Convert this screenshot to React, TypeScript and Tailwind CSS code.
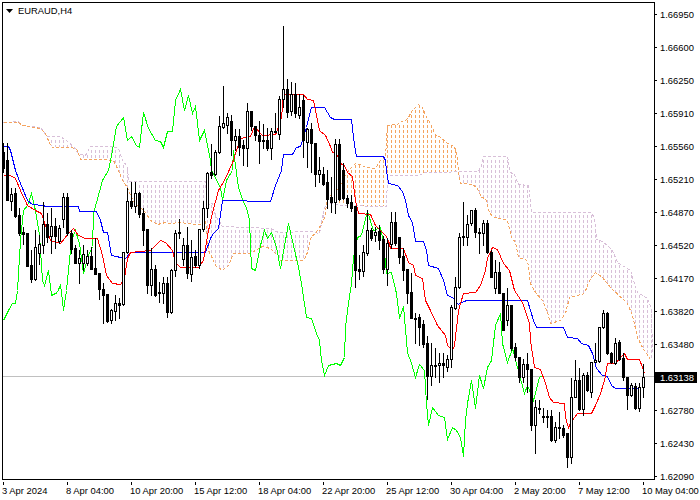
type Pt = [number, number];

// high, low, body top, body bottom, bullish (white) - one candle every 4px from x=3
const candles: number[][] = [
  [143,172,152,168,0],[143,200,160,200,0],[188,210,194,201,1],[188,217,193,216,0],[208,235,215,233,0],[227,244,232,234,0],[233,266,233,266,0],[250,282,265,279,0],
  [230,280,247,279,1],[235,264,244,253,1],[202,253,224,245,1],[213,242,224,237,0],[208,253,226,236,1],[218,248,226,236,0],[225,243,228,241,1],[193,227,197,219,1],
  [193,235,197,233,0],[230,253,233,249,0],[245,263,248,263,0],[250,283,258,263,1],[245,270,254,263,1],[250,265,256,263,1],[247,269,256,269,0],[238,274,268,274,0],
  [273,299,273,289,0],[283,323,289,295,0],[294,322,294,321,0],[309,323,310,320,1],[295,320,303,311,1],[298,318,303,305,0],[252,305,252,304,1],[188,253,201,252,1],
  [182,208,201,206,0],[182,212,193,206,1],[192,217,193,214,0],[208,245,213,230,0],[229,293,229,285,0],[248,295,269,285,1],[265,296,269,295,0],[282,302,292,293,0],
  [277,303,283,293,1],[277,317,283,312,0],[269,313,270,312,1],[230,276,233,270,1],[219,238,232,233,0],[238,265,245,259,1],[227,278,245,273,0],[240,281,257,274,1],
  [250,267,256,265,0],[229,268,229,265,1],[201,231,208,229,1],[172,217,173,208,1],[144,178,172,175,0],[150,175,152,174,1],[116,153,126,152,1],[86,128,123,127,1],
  [113,133,117,125,1],[115,155,121,140,0],[129,150,136,140,1],[129,155,136,147,0],[140,165,145,148,0],[103,166,111,148,1],[111,130,111,126,0],[126,140,126,135,0],
  [121,163,135,141,0],[124,148,140,141,0],[128,150,140,148,0],[128,159,131,148,1],[113,132,131,132,0],[96,139,99,134,1],[26,107,89,99,1],[79,117,89,112,0],
  [82,115,94,111,1],[83,117,94,113,0],[94,118,107,115,1],[95,157,100,140,0],[128,167,129,142,1],[123,172,129,143,0],[143,186,143,174,0],[157,182,170,174,1],
  [167,185,174,184,0],[170,208,182,199,0],[177,212,197,202,0],[139,213,144,202,1],[139,200,144,199,0],[163,199,170,198,0],[195,207,198,203,0],[195,211,202,208,0],
  [206,287,206,270,0],[255,279,269,271,0],[245,276,252,271,1],[210,255,230,253,1],[228,240,230,238,0],[227,241,232,235,1],[225,249,231,240,0],[236,273,239,269,0],
  [238,285,243,269,1],[212,248,222,244,1],[212,245,222,243,0],[237,263,237,257,0],[248,280,256,270,0],[269,303,269,293,0],[273,318,292,318,0],[313,343,318,319,0],
  [314,345,317,327,0],[320,347,324,344,0],[336,399,343,376,0],[343,385,365,376,1],[348,377,365,366,0],[353,382,363,365,1],[353,377,363,365,0],[355,371,359,367,1],
  [305,367,307,359,1],[277,309,287,308,1],[233,288,237,287,1],[202,245,236,237,0],[215,245,224,237,1],[210,225,210,223,1],[208,237,210,232,0],[228,253,232,233,0],
  [220,245,223,233,1],[220,253,223,252,0],[250,277,252,277,0],[260,293,272,288,1],[262,293,272,293,0],[293,330,293,330,0],[288,325,305,320,1],[305,350,305,348,0],
  [343,360,347,357,0],[357,382,357,377,0],[359,382,364,377,1],[353,392,364,369,0],[369,430,369,425,0],[400,453,407,425,1],[400,413,408,409,0],[408,422,416,417,0],
  [410,427,416,417,0],[410,441,416,440,0],[422,442,427,440,1],[412,438,427,428,0],[425,437,428,435,0],[433,467,433,457,0],[378,463,397,457,1],[360,397,380,397,1],
  [368,410,380,409,0],[373,415,375,409,1],[372,391,375,390,0],[362,397,362,392,1],[343,362,360,362,1],[327,362,327,361,1],[310,328,313,327,1],[312,354,313,353,0],
  [352,363,353,362,0],[338,364,343,363,1],[340,360,342,359,0],[353,380,358,377,0],[377,409,377,395,0],[383,396,385,395,1],[383,409,386,408,0],[383,411,387,408,1],
  [364,397,377,387,1],
];

const kijun: Pt[] = [[3,146],[8,146],[10,150],[15,170],[20,183],[27,200],[32,204],[43,205],[45,206],[78,206],[79,211],[96,211],[100,220],[103,232],[107,232],[111,255],[125,258],[130,252],[205,252],[210,238],[213,233],[218,228],[222,200],[270,201],[275,185],[281,170],[283,154],[292,154],[296,147],[300,146],[306,127],[311,107],[324,107],[330,117],[334,119],[351,119],[354,145],[356,156],[383,156],[385,160],[386,170],[388,183],[397,185],[402,191],[405,200],[408,215],[412,222],[415,241],[423,241],[426,250],[428,265],[438,268],[443,280],[447,295],[452,297],[458,304],[463,301],[467,300],[527,300],[533,320],[536,327],[563,327],[567,337],[577,338],[581,343],[588,345],[592,353],[596,368],[602,375],[607,376],[611,385],[615,388],[640,388]];

const tenkan: Pt[] = [[3,175],[10,175],[15,178],[20,190],[27,205],[35,210],[41,213],[45,225],[50,240],[60,243],[68,233],[73,228],[78,235],[85,238],[97,238],[102,255],[106,275],[112,283],[120,284],[124,278],[127,258],[130,252],[150,250],[160,240],[165,242],[172,250],[175,262],[180,267],[198,267],[203,260],[207,235],[212,212],[218,190],[225,178],[233,160],[235,153],[240,138],[250,136],[254,126],[262,135],[275,134],[276,132],[281,117],[283,94],[303,94],[307,99],[313,100],[316,115],[319,130],[325,135],[330,146],[332,152],[336,153],[340,163],[344,165],[347,172],[352,176],[355,200],[358,213],[370,214],[375,225],[385,235],[388,240],[390,248],[403,248],[408,262],[413,265],[415,275],[422,278],[425,300],[430,310],[437,325],[445,335],[447,345],[452,350],[454,345],[458,310],[463,293],[475,292],[480,285],[485,270],[487,258],[492,247],[497,249],[503,263],[509,270],[514,290],[522,302],[529,323],[530,340],[534,367],[540,369],[545,383],[549,397],[553,402],[564,403],[565,417],[568,427],[570,423],[574,417],[577,413],[591,413],[595,405],[600,393],[604,380],[607,363],[615,363],[620,357],[624,353],[627,359],[639,359],[642,367],[644,373]];

const chikou: Pt[] = [[3,320],[8,310],[12,303],[15,303],[17,290],[20,240],[23,210],[27,205],[31,193],[35,210],[39,235],[42,280],[44,285],[48,270],[51,295],[57,292],[60,284],[62,300],[63,310],[66,290],[71,240],[75,230],[79,243],[83,273],[88,255],[92,246],[93,213],[102,180],[108,170],[112,150],[116,126],[123,117],[127,140],[131,136],[136,145],[139,147],[143,112],[148,128],[155,140],[160,141],[163,147],[167,131],[172,131],[175,100],[180,89],[184,110],[188,95],[192,113],[195,106],[199,140],[204,130],[210,160],[211,170],[220,187],[222,200],[226,180],[232,170],[233,150],[235,165],[238,187],[243,202],[246,207],[249,220],[251,268],[255,270],[260,245],[264,230],[267,238],[271,232],[276,247],[280,268],[288,223],[298,267],[301,283],[306,317],[311,318],[316,333],[319,340],[321,360],[324,375],[328,365],[336,363],[340,365],[344,357],[345,327],[348,303],[351,283],[353,257],[357,237],[361,235],[367,211],[373,230],[380,227],[383,242],[386,273],[391,272],[396,293],[399,318],[403,306],[406,340],[407,352],[411,363],[415,377],[419,364],[424,370],[426,403],[428,425],[432,407],[438,415],[444,417],[447,439],[452,427],[456,430],[460,437],[463,456],[465,420],[467,403],[471,380],[475,408],[479,375],[483,388],[487,367],[491,360],[495,325],[500,313],[502,343],[507,362],[512,348],[517,367],[524,393],[527,385],[533,400],[539,377],[542,375]];

const spanA: Pt[] = [[3,122],[18,122],[22,125],[40,128],[45,133],[50,145],[52,147],[72,147],[77,150],[80,159],[100,159],[113,160],[118,170],[122,180],[127,187],[130,195],[135,204],[141,208],[145,212],[150,220],[157,224],[165,222],[170,223],[180,222],[195,224],[201,224],[205,220],[208,250],[212,258],[215,265],[222,270],[228,265],[233,253],[250,253],[258,248],[262,246],[270,248],[277,255],[280,260],[303,260],[306,255],[311,236],[315,233],[322,222],[325,215],[326,200],[330,195],[337,190],[343,178],[350,168],[355,163],[360,164],[365,167],[375,168],[380,160],[385,157],[387,125],[397,124],[400,121],[405,120],[408,117],[411,111],[418,104],[422,107],[425,115],[428,120],[431,125],[435,135],[441,137],[445,142],[452,145],[456,150],[458,172],[460,183],[472,184],[477,188],[481,197],[485,198],[489,212],[492,216],[507,220],[511,237],[515,242],[518,257],[527,260],[530,283],[535,292],[542,300],[547,312],[550,323],[560,320],[565,313],[569,297],[584,293],[589,280],[595,272],[602,277],[610,287],[627,303],[632,315],[637,337],[642,347],[650,359]];

const spanB: Pt[] = [[3,122],[18,121],[22,125],[40,127],[43,131],[47,136],[60,136],[67,141],[73,146],[78,153],[85,155],[90,146],[112,146],[118,148],[122,160],[127,166],[128,181],[205,181],[207,205],[212,203],[215,215],[222,226],[270,228],[278,232],[310,231],[319,233],[323,212],[326,202],[340,205],[386,206],[387,175],[418,175],[425,172],[478,171],[481,165],[483,156],[507,156],[510,172],[514,174],[518,184],[528,185],[531,212],[591,212],[594,218],[596,239],[602,241],[608,246],[612,250],[617,262],[630,270],[633,280],[637,292],[647,298],[651,308],[652,353]];

const priceLabels = ["1.66950","1.66600","1.66250","1.65910","1.65560","1.65210","1.64870","1.64520","1.64170","1.63820","1.63480","1.63138","1.62780","1.62430","1.62090"];
const timeLabels = ["3 Apr 2024","8 Apr 04:00","10 Apr 20:00","15 Apr 12:00","18 Apr 04:00","22 Apr 20:00","25 Apr 12:00","30 Apr 04:00","2 May 20:00","7 May 12:00","10 May 04:00"];

const toPoints = (line: Pt[]) => line.map(([x, y]) => `${x + 0.5},${y + 0.5}`).join(" ");

const valueAt = (line: Pt[], x: number) => {
  for (let i = 1; i < line.length; i++) {
    if (x <= line[i][0]) {
      const [x0, y0] = line[i - 1];
      const [x1, y1] = line[i];
      return y0 + ((y1 - y0) * (x - x0)) / (x1 - x0);
    }
  }
  return line[line.length - 1][1];
};

// Cloud hatching: one dotted column per bar, rows kept on a 5px grid
const CloudHatch = () => {
  const columns = [];
  for (let x = 3; x <= 651; x += 4) {
    const a = valueAt(spanA, x);
    const b = valueAt(spanB, x);
    const top = Math.ceil(Math.min(a, b) / 5) * 5;
    const bottom = Math.max(a, b);
    if (bottom - top < 2) continue;
    columns.push(
      <line key={x} x1={x + 0.5} x2={x + 0.5} y1={top} y2={bottom} stroke={a < b ? "#F4A460" : "#D8BFD8"} strokeDasharray="3 2" />
    );
  }
  return <g>{columns}</g>;
};

const Candle = ({ x, c }: { x: number; c: number[] }) => {
  const [high, low, top, bottom, bull] = c;
  return (
    <g>
      <rect x={x} y={high} width={1} height={low - high + 1} fill="#000" />
      <rect x={x - 1} y={top} width={3} height={bottom - top + 1} fill="#000" />
      {bull === 1 && bottom - top > 1 && <rect x={x} y={top + 1} width={1} height={bottom - top - 1} fill="#fff" />}
    </g>
  );
};

const Chart = () => (
  <svg width={651} height={476} viewBox="3 3 651 476" shapeRendering="crispEdges" className="block">
    <line x1={3} x2={654} y1={376.5} y2={376.5} stroke="#C0C0C0" />
    <CloudHatch />
    <polyline points={toPoints(spanB)} fill="none" stroke="#D8BFD8" strokeDasharray="3 2" />
    <polyline points={toPoints(spanA)} fill="none" stroke="#F4A460" strokeDasharray="3 2" />
    <polyline points={toPoints(chikou)} fill="none" stroke="#00FF00" />
    <polyline points={toPoints(kijun)} fill="none" stroke="#0000FF" />
    <polyline points={toPoints(tenkan)} fill="none" stroke="#FF0000" />
    {candles.map((c, i) => (
      <Candle key={i} x={3 + i * 4} c={c} />
    ))}
  </svg>
);

export default function App() {
  return (
    <div className="w-[700px] h-[500px] overflow-hidden bg-white text-black font-['Liberation_Sans',sans-serif] text-[9.4px] leading-[11px]">
      <div className="flex pt-[2px] pl-[2px]">
        {/* Chart window */}
        <div className="relative w-[653px] h-[478px] border border-black">
          <Chart />
          <div className="absolute left-[3px] top-[2px] flex items-center gap-[5px] whitespace-nowrap">
            <svg width={7} height={4} viewBox="0 0 7 4" className="block">
              <polygon points="0,0 7,0 3.5,4" fill="#000" />
            </svg>
            <span>EURAUD,H4</span>
          </div>
        </div>

        {/* Price axis */}
        <div className="flex flex-col gap-[22px] pt-[7px] -ml-px">
          {priceLabels.map((p) =>
            p === "1.63138" ? (
              <div key={p} className="flex items-center h-[11px] w-[43px] bg-black text-white pl-[6px]">
                {p}
              </div>
            ) : (
              <div key={p} className="flex items-center h-[11px]">
                <div className="w-[3px] h-px bg-black" />
                <span className="ml-[3px]">{p}</span>
              </div>
            )
          )}
        </div>
      </div>

      {/* Time axis */}
      <div className="flex pl-[3px]">
        {timeLabels.map((t) => (
          <div key={t} className="w-[64px] shrink-0">
            <div className="w-px h-[3px] bg-black" />
            <div className="whitespace-nowrap -ml-px">{t}</div>
          </div>
        ))}
      </div>
    </div>
  );
}
